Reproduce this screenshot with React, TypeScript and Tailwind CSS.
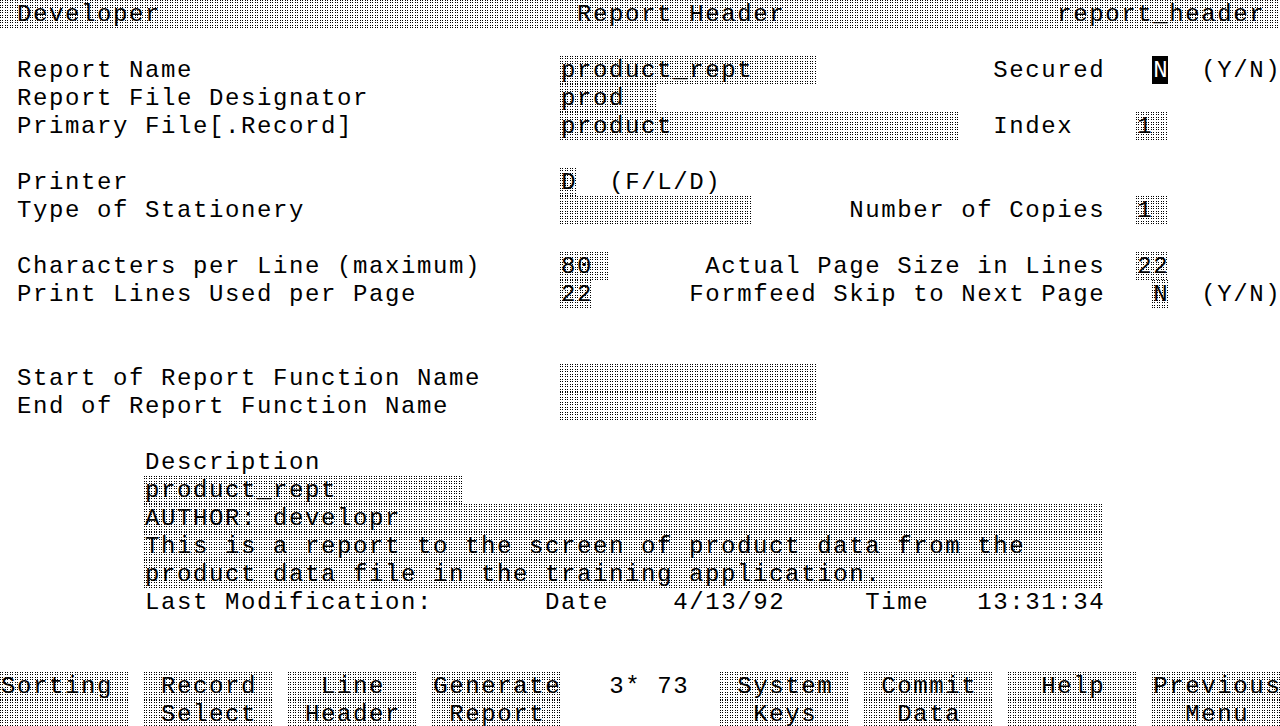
import React from "react";

const DITHER =
  "[background-image:conic-gradient(at_1px_1px,transparent_75%,#000_0),conic-gradient(at_1px_1px,transparent_75%,#000_0),conic-gradient(at_1px_1px,transparent_75%,#000_0),conic-gradient(at_1px_1px,transparent_75%,#000_0)] [background-size:5px_5px] [background-position:0_0,2px_0,0_2px,2px_2px]";

type Item = { c: number; t: string; w?: number; k?: "d" | "i" };

function Row({ items, full }: { items?: Item[]; full?: boolean }) {
  if (!items) return <div className="h-[28px]" />;
  let cursor = 0;
  const out: React.ReactNode[] = [];
  items.forEach((it, i) => {
    if (it.c > cursor) {
      out.push(
        <span key={"s" + i} className="h-[28px]">
          {" ".repeat(it.c - cursor)}
        </span>
      );
    }
    const w = it.w ?? it.t.length;
    const cls =
      it.k === "d" ? DITHER : it.k === "i" ? "bg-black text-white" : "";
    out.push(
      <span key={"t" + i} className={"h-[28px] " + cls}>
        <span className="relative left-[1px]">{it.t.padEnd(w, " ")}</span>
      </span>
    );
    cursor = it.c + w;
  });
  return (
    <div
      className={
        "flex h-[28px] whitespace-pre leading-[30px] " + (full ? DITHER : "")
      }
    >
      {out}
    </div>
  );
}

const rows: (Item[] | undefined)[] = [
  undefined,
  undefined,
  [
    { c: 1, t: "Report Name" },
    { c: 35, t: "product_rept", w: 16, k: "d" },
    { c: 62, t: "Secured" },
    { c: 72, t: "N", w: 1, k: "i" },
    { c: 75, t: "(Y/N)" },
  ],
  [
    { c: 1, t: "Report File Designator" },
    { c: 35, t: "prod", w: 6, k: "d" },
  ],
  [
    { c: 1, t: "Primary File[.Record]" },
    { c: 35, t: "product", w: 25, k: "d" },
    { c: 62, t: "Index" },
    { c: 71, t: "1", w: 2, k: "d" },
  ],
  undefined,
  [
    { c: 1, t: "Printer" },
    { c: 35, t: "D", w: 1, k: "d" },
    { c: 38, t: "(F/L/D)" },
  ],
  [
    { c: 1, t: "Type of Stationery" },
    { c: 35, t: "", w: 12, k: "d" },
    { c: 53, t: "Number of Copies" },
    { c: 71, t: "1", w: 2, k: "d" },
  ],
  undefined,
  [
    { c: 1, t: "Characters per Line (maximum)" },
    { c: 35, t: "80", w: 3, k: "d" },
    { c: 44, t: "Actual Page Size in Lines" },
    { c: 71, t: "22", w: 2, k: "d" },
  ],
  [
    { c: 1, t: "Print Lines Used per Page" },
    { c: 35, t: "22", w: 2, k: "d" },
    { c: 43, t: "Formfeed Skip to Next Page" },
    { c: 72, t: "N", w: 1, k: "d" },
    { c: 75, t: "(Y/N)" },
  ],
  undefined,
  undefined,
  [
    { c: 1, t: "Start of Report Function Name" },
    { c: 35, t: "", w: 16, k: "d" },
  ],
  [
    { c: 1, t: "End of Report Function Name" },
    { c: 35, t: "", w: 16, k: "d" },
  ],
  undefined,
  [{ c: 9, t: "Description" }],
  [{ c: 9, t: "product_rept", w: 20, k: "d" }],
  [{ c: 9, t: "AUTHOR: developr", w: 60, k: "d" }],
  [
    {
      c: 9,
      t: "This is a report to the screen of product data from the",
      w: 60,
      k: "d",
    },
  ],
  [
    {
      c: 9,
      t: "product data file in the training application.",
      w: 60,
      k: "d",
    },
  ],
  [
    { c: 9, t: "Last Modification:" },
    { c: 34, t: "Date" },
    { c: 42, t: "4/13/92" },
    { c: 54, t: "Time" },
    { c: 61, t: "13:31:34" },
  ],
  undefined,
  undefined,
  [
    { c: 0, t: "Sorting", w: 8, k: "d" },
    { c: 9, t: " Record", w: 8, k: "d" },
    { c: 18, t: "  Line", w: 8, k: "d" },
    { c: 27, t: "Generate", w: 8, k: "d" },
    { c: 38, t: "3* 73" },
    { c: 45, t: " System", w: 8, k: "d" },
    { c: 54, t: " Commit", w: 8, k: "d" },
    { c: 63, t: "  Help", w: 8, k: "d" },
    { c: 72, t: "Previous", w: 8, k: "d" },
  ],
  [
    { c: 0, t: "", w: 8, k: "d" },
    { c: 9, t: " Select", w: 8, k: "d" },
    { c: 18, t: " Header", w: 8, k: "d" },
    { c: 27, t: " Report", w: 8, k: "d" },
    { c: 45, t: "  Keys", w: 8, k: "d" },
    { c: 54, t: "  Data", w: 8, k: "d" },
    { c: 63, t: "", w: 8, k: "d" },
    { c: 72, t: "  Menu", w: 8, k: "d" },
  ],
];

export default function App() {
  return (
    <div className="w-[1280px] h-[726px] overflow-hidden bg-white text-black font-['Liberation_Mono',monospace] text-[24px] tracking-[1.6px]">
      <Row
        full
        items={[
          { c: 1, t: "Developer" },
          { c: 36, t: "Report Header" },
          { c: 66, t: "report_header" },
        ]}
      />
      {rows.slice(1).map((r, i) => (
        <Row key={i} items={r} />
      ))}
    </div>
  );
}
